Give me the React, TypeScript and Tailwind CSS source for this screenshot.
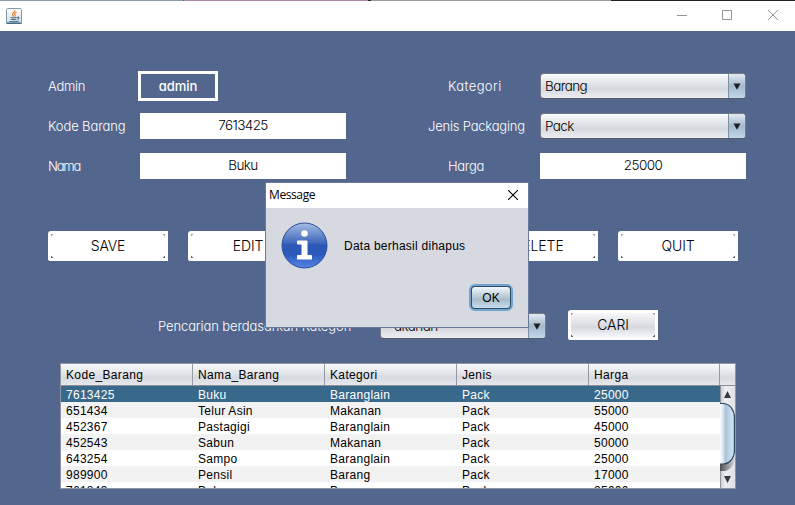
import type { ReactNode } from "react";

const hand = "font-['Inter',sans-serif] font-light [font-feature-settings:'cv11','ss03']";
const arial = "font-['Liberation_Sans',Arial,sans-serif]";

const rows = [
  ["7613425", "Buku", "Baranglain", "Pack", "25000"],
  ["651434", "Telur Asin", "Makanan", "Pack", "55000"],
  ["452367", "Pastagigi", "Baranglain", "Pack", "45000"],
  ["452543", "Sabun", "Makanan", "Pack", "50000"],
  ["643254", "Sampo", "Baranglain", "Pack", "25000"],
  ["989900", "Pensil", "Barang", "Pack", "17000"],
  ["761843", "Buku", "Barang", "Pack", "25000"],
];
const columns = ["Kode_Barang", "Nama_Barang", "Kategori", "Jenis", "Harga"];

function JavaIcon() {
  return (
    <svg width="16" height="16" viewBox="0 0 16 16" fill="none" className="-mt-px">
      <defs>
        <linearGradient id="java" x1="0" y1="0" x2="0" y2="1">
          <stop offset="0" stopColor="#fdfdfd" />
          <stop offset="1" stopColor="#d3dbe2" />
        </linearGradient>
      </defs>
      <rect x=".5" y=".5" width="15" height="15" rx="1" fill="url(#java)" stroke="#7f99ab" />
      <path d="M.5 15.2h15" stroke="#426780" strokeWidth="1.4" />
      <path d="M8.9 2.2c.6 2-3.2 2.700-2.300 4.600.3.700.9 1.100 1.100 1.800M10.500 4.300c-1.800.8-2.400 1.700-1.500 2.600.6.700.2 1.300-.3 1.700" stroke="#e8822c" strokeWidth="1.200" />
      <path d="M4.500 9.500c2 .5 4.300.5 6.200 0M5 11.200c1.800.5 3.700.5 5.300 0M3.200 13.200c3 .8 7 .8 9.600-.1M11.200 9.300c2.200-.7 2.500 1.200.2 2" stroke="#47718e" strokeWidth="1.100" />
    </svg>
  );
}

function Combo({ text, width, pad = "pl-[4px]" }: { text: string; width: string; pad?: string }) {
  return (
    <div className={`flex h-[26px] ${width} overflow-hidden rounded-[4px] border border-[#777b86] border-b-[#555a63] bg-linear-to-b from-[#fbfbfc] via-[#d6d9df] via-60% to-[#eceef3]`}>
      <div className={`flex-1 ${pad} ${hand} text-[13.5px] leading-[24px] tracking-[-0.6px] text-black`}>{text}</div>
      <div className="flex w-[17px] items-center justify-center border-l border-[#7c93a7] bg-linear-to-b from-[#e3ebf2] via-[#a5b9cb] via-50% to-[#c0d8ea]">
        <svg width="8" height="7" viewBox="0 0 8 7"><path d="M.5.5h7L4 6.800z" fill="#1c1e22" /></svg>
      </div>
    </div>
  );
}

function Field({ children }: { children: ReactNode }) {
  return <div className={`h-[26px] w-[206px] bg-white text-center ${hand} text-[13.5px] leading-[25px] tracking-[-0.6px] text-black`}>{children}</div>;
}

function Label({ children, className }: { children: ReactNode; className: string }) {
  return <div className={`shrink-0 whitespace-nowrap ${hand} text-[13px] leading-5 text-white ${className}`}>{children}</div>;
}

function FormButton({ text, width = "w-[120px]", fill = "bg-white" }: { text: string; width?: string; fill?: string }) {
  return (
    <button className={`h-[30px] ${width} shrink-0 rounded-tl-[3px] rounded-bl-[2px] bg-white p-[3px]`}>
      <span className={`grid h-6 grid-cols-[3px_1fr_3px] ${fill}`}>
        <Corners />
        <span className={`text-center ${hand} text-[14px] leading-[23px] tracking-[-0.1px] text-black`}>{text}</span>
        <span className="scale-x-[-1]"><Corners /></span>
      </span>
    </button>
  );
}

function Corners() {
  return (
    <svg width="3" height="24" viewBox="0 0 3 24" className="block">
      <path d="M0 0h2.500L0 2.500z" fill="#9ca0a8" />
      <path d="M0 24h2.500L0 21.500z" fill="#5d626b" />
    </svg>
  );
}

function ScrollBar() {
  return (
    <svg width="15" height="102" viewBox="0 0 15 102" className="block shrink-0">
      <defs>
        <linearGradient id="track"><stop offset="0" stopColor="#c6c8cd" /><stop offset=".35" stopColor="#eceef1" /><stop offset="1" stopColor="#dfe1e5" /></linearGradient>
        <linearGradient id="thumb"><stop offset="0" stopColor="#fafdff" /><stop offset=".2" stopColor="#dbe8f3" /><stop offset=".38" stopColor="#adc3d6" /><stop offset=".85" stopColor="#cce3f7" /><stop offset="1" stopColor="#a4bfd5" /></linearGradient>
        <linearGradient id="shade"><stop offset="0" stopColor="#4d4f53" /><stop offset="1" stopColor="#d7d9dd" /></linearGradient>
      </defs>
      <path d="M0 0h15v102H0z" fill="url(#track)" />
      <path d="M.5 0v102" stroke="#92969e" />
      <path d="M0 72h15c-1 8-6 13-11 13H0z" fill="url(#shade)" />
      <path d="M0 17.500h3c7 0 11.500 7 11.500 14V64c0 8-5 14-11.500 14H0z" fill="url(#thumb)" />
      <path d="M0 17.500h3c7 0 11.500 7 11.500 14V64c0 8-5 14-11.500 14H0" fill="none" stroke="#304b60" strokeWidth="1.200" />
      <path d="M4 12h7L7.500 5z M4 90h7L7.500 97z" fill="#383a3f" />
    </svg>
  );
}

function Dialog() {
  return (
    <div className="absolute left-[265px] top-[182px] flex h-[146px] w-[264px] flex-col border border-[#69799a] bg-[#d6d9e0]">
      <div className="flex h-[25px] shrink-0 items-center justify-between bg-white pl-[3px] pr-[10px]">
        <span className="-mt-px font-['Open_Sans','Noto_Sans',sans-serif] text-[12px] leading-6 tracking-[-0.4px] text-black">Message</span>
        <svg width="10" height="10" viewBox="0 0 10 10" className="-mt-px"><path d="M0 0l10 10M10 0L0 10" stroke="#000" strokeWidth="1.100" /></svg>
      </div>
      <div className="flex items-center gap-[16px] pl-[15px] pt-[14px]">
        <svg width="47" height="47" viewBox="0 0 47 47">
          <defs>
            <linearGradient id="info" x1="0" y1="0" x2="0" y2="1">
              <stop offset="0" stopColor="#a5bde5" /><stop offset=".44" stopColor="#3f67bb" /><stop offset=".5" stopColor="#2a57b3" /><stop offset=".7" stopColor="#2c5bbd" /><stop offset="1" stopColor="#5584e4" />
            </linearGradient>
          </defs>
          <circle cx="23.500" cy="23.500" r="22.500" fill="url(#info)" stroke="#2a4f9d" />
          <circle cx="23.500" cy="11.500" r="3.300" fill="#fff" />
          <path d="M17.500 18.500h8a1 1 0 0 1 1 1V33h3.500a1 1 0 0 1 1 1v3.500h-15V34a1 1 0 0 1 1-1h3.500V22.500h-3.500a1 1 0 0 1-1-1v-2a1 1 0 0 1 1-1z" fill="#fff" />
        </svg>
        <span className={`${arial} text-[12px] leading-4 tracking-[0.25px] text-black`}>Data berhasil dihapus</span>
      </div>
      <div className="flex justify-end pr-[15px] pt-[15px]">
        <button className={`h-[27px] w-[44px] rounded-[6px] border-2 border-[#73a4d1] bg-[#2e4d66] p-px ${arial} text-[12px] text-black`}>
          <span className="block h-[21px] rounded-[3px] bg-linear-to-b from-[#f3f7fb] via-[#a9bccc] via-60% to-[#c6ddef] leading-[23px]">OK</span>
        </button>
      </div>
    </div>
  );
}

export default function App() {
  return (
    <div className="relative flex h-[505px] w-[795px] flex-col overflow-hidden bg-[#53668d]">
      <div className="flex h-px shrink-0">
        <div className="w-[183px] bg-[#8f9aaa]" />
        <div className="w-px bg-[#655771]" />
        <div className="w-[184px] bg-[#a888a4]" />
        <div className="w-[3px] bg-[#302830]" />
        <div className="w-[240px] bg-[#9b9b9b]" />
        <div className="flex-1 bg-[#242328]" />
      </div>
      <header className="flex h-[30px] shrink-0 items-center justify-between bg-white pl-[6px] pr-[17px]">
        <JavaIcon />
        <svg width="101" height="10" viewBox="0 0 101 10" fill="none" stroke="#929292" className="-mt-[2px]">
          <path d="M0 5.500h10M91 0l10 10M101 0L91 10" /><path d="M45.500.500h9v9h-9z" />
        </svg>
      </header>
      <main className="pt-[35px]">
        <section className="flex pl-12">
          <div className="w-[380px]">
            <div className="flex h-10 items-center">
              <Label className="w-[90px] tracking-[-0.3px]">Admin</Label>
              <div className="h-[30px] w-20 border-3 border-white text-center font-['Inter',sans-serif] text-[13px] leading-[24px] font-medium text-white [font-feature-settings:'cv11']">admin</div>
            </div>
            <div className="flex h-10 items-center"><Label className="w-[92px] tracking-[-0.1px]">Kode Barang</Label><Field>7613425</Field></div>
            <div className="flex h-10 items-center"><Label className="w-[92px] tracking-[-1.2px]">Nama</Label><Field>Buku</Field></div>
          </div>
          <div>
            <div className="flex h-10 items-center"><Label className="w-[112px] pl-5 tracking-[0.4px]">Kategori</Label><Combo text="Barang" width="w-[206px]" /></div>
            <div className="flex h-10 items-center"><Label className="w-[112px] tracking-[-0.2px]">Jenis Packaging</Label><Combo text="Pack" width="w-[206px]" /></div>
            <div className="flex h-10 items-center"><Label className="w-[112px] pl-5 tracking-[-0.3px]">Harga</Label><Field>25000</Field></div>
          </div>
        </section>
        <section className="mt-[45px] flex gap-5 pl-12">
          <FormButton text="SAVE" />
          <FormButton text="EDIT" />
          <div className="ml-[150px] flex gap-5"><FormButton text="DELETE" /><FormButton text="QUIT" /></div>
        </section>
        <section className="mt-[50px] flex h-[30px] items-center pl-[158px]">
          <Label className="-mt-px w-[222px] tracking-[-0.1px]">Pencarian berdasarkan Kategori</Label>
          <Combo text="akanan" width="w-[166px]" pad="pl-[13px]" />
          <div className="ml-[22px]"><FormButton text="CARI" width="w-[90px]" fill="bg-linear-to-b from-[#f8f8fa] via-[#d6d9df] via-60% to-[#f6f7fb]" /></div>
        </section>
        <section className={`ml-[60px] mt-[22px] h-[126px] w-[676px] overflow-hidden border border-[#9295a0] bg-white ${arial} text-[12px] text-black`}>
          <div className="flex h-[22px] border-b border-[#8b8e97] bg-linear-to-b from-[#fafafb] via-[#d7dae0] via-65% to-[#e6e8ed]">
            {columns.map((c, i) => (
              <div key={c} className={`${i === 4 ? "w-[131px]" : "w-[132px]"} shrink-0 border-r border-[#9599a2] pl-[5px] leading-[22px] tracking-[0.35px]`}>{c}</div>
            ))}
          </div>
          <div className="flex h-[102px]">
            <div className="w-[659px] shrink-0">
              {rows.map((r, i) => (
                <div key={r[0]} className={`flex h-4 leading-[18px] tracking-[0.28px] ${i === 0 ? "bg-[#39698a] text-white" : i % 2 ? "bg-[#f2f2f2]" : "bg-white"}`}>
                  {r.map((v, j) => <div key={j} className="w-[132px] shrink-0 pl-[5px] last:w-[131px]">{v}</div>)}
                </div>
              ))}
            </div>
            <ScrollBar />
          </div>
        </section>
      </main>
      <Dialog />
    </div>
  );
}
